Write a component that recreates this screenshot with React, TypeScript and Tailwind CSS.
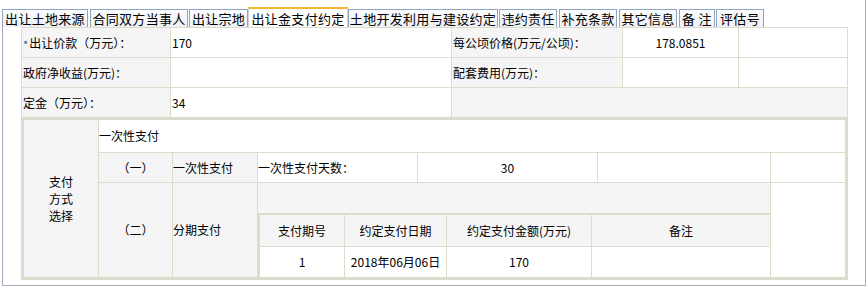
import React from "react";

const tabs: { label: string; w: number; ml: number; active?: boolean }[] = [
  { label: "出让土地来源", w: 86, ml: 0 },
  { label: "合同双方当事人", w: 98, ml: 2 },
  { label: "出让宗地", w: 59, ml: 1 },
  { label: "出让金支付约定", w: 100, ml: 0, active: true },
  { label: "土地开发利用与建设约定", w: 150, ml: 0 },
  { label: "违约责任", w: 58, ml: 1 },
  { label: "补充条款", w: 58, ml: 2 },
  { label: "其它信息", w: 58, ml: 2 },
  { label: "备 注", w: 36, ml: 2 },
  { label: "评估号", w: 48, ml: 1 },
];

const G = "bg-[#f5f5f5]";
const W = "bg-white";

export default function App() {
  return (
    <div className="w-[866px] h-[294px] bg-white text-black font-['Noto_Sans_CJK_SC',sans-serif] text-[12px] leading-[14px]">
      <div className="ml-[2px] w-[864px] h-[286px] border-r border-b border-[#a5adba] flex flex-col">
        {/* tabs */}
        <div className="h-[27px] flex items-end">
          {tabs.map((t) =>
            t.active ? (
              <div
                key={t.label}
                style={{ width: t.w, marginLeft: t.ml }}
                className="h-[20px] bg-white border-t-2 border-t-[#f5b537] border-x border-x-[#c9d2dc] flex items-center justify-center text-[13px] leading-none tracking-[0.3px] whitespace-nowrap"
              >
                {t.label}
              </div>
            ) : (
              <div
                key={t.label}
                style={{ width: t.w, marginLeft: t.ml }}
                className="h-[18px] bg-gradient-to-b from-[#fbfcfd] to-[#eef1f5] border-t border-x border-[#8fa4be] flex items-center justify-center text-[13px] leading-none tracking-[0.3px] whitespace-pre"
              >
                {t.label}
              </div>
            )
          )}
        </div>
        {/* body */}
        <div className="flex-1 border-l border-[#a5adba] pl-[18px]">
          <div className="w-[827px] grid grid-cols-[148px_280px_170px_115px_108px] grid-rows-[29px_29px_29px_161px] gap-px p-px bg-[#dddccc]">
            {/* row 1 */}
            <div className={`${G} flex items-center pl-[1px]`}>
              <span className="text-[11px] text-[#2d4f8e] leading-none mr-[1px] translate-y-[2px]">*</span>
              出让价款（万元）：
            </div>
            <div className={`${W} flex items-center pl-[1px]`}>170</div>
            <div className={`${G} flex items-center pl-[1px]`}>每公顷价格(万元/公顷)：</div>
            <div className={`${W} flex items-center justify-center`}>178.0851</div>
            <div className={W}></div>
            {/* row 2 */}
            <div className={`${G} flex items-center pl-[1px]`}>政府净收益(万元)：</div>
            <div className={W}></div>
            <div className={`${G} flex items-center pl-[1px]`}>配套费用(万元)：</div>
            <div className={W}></div>
            <div className={W}></div>
            {/* row 3 */}
            <div className={`${G} flex items-center pl-[1px]`}>定金（万元）：</div>
            <div className={`${W} flex items-center pl-[1px]`}>34</div>
            <div className={`${G} col-span-3`}></div>
            {/* row 4 nested */}
            <div className="col-span-5 bg-[#dddccc] p-[2px] grid grid-cols-[74px_73px_84px_159px_179px_172px_74px] grid-rows-[32px_29px_94px] gap-px">
              <div className={`${G} row-span-3 flex flex-col items-center justify-center text-center leading-[17px]`}>
                <span>支付</span>
                <span>方式</span>
                <span>选择</span>
              </div>
              <div className={`${W} col-span-6 flex items-center`}>一次性支付</div>
              {/* row B */}
              <div className={`${G} flex items-center justify-center`}>（一）</div>
              <div className={`${G} flex items-center`}>一次性支付</div>
              <div className={`${W} flex items-center`}>一次性支付天数：</div>
              <div className={`${W} flex items-center justify-center`}>30</div>
              <div className={W}></div>
              <div className={W}></div>
              {/* row C */}
              <div className={`${G} flex items-center justify-center`}>（二）</div>
              <div className={`${G} flex items-center`}>分期支付</div>
              <div className="col-span-3 flex flex-col bg-[#dddccc]">
                <div className={`${G} h-[30px]`}></div>
                <div className="flex-1 pl-[2px] pt-[2px] grid grid-cols-[84px_101px_144px_178px] grid-rows-[31px_30px] gap-px">
                  <div className={`${G} flex items-center justify-center`}>支付期号</div>
                  <div className={`${G} flex items-center justify-center`}>约定支付日期</div>
                  <div className={`${G} flex items-center justify-center`}>约定支付金额(万元)</div>
                  <div className={`${G} flex items-center justify-center`}>备注</div>
                  <div className={`${W} flex items-center justify-center`}>1</div>
                  <div className={`${W} flex items-center justify-center`}>2018年06月06日</div>
                  <div className={`${W} flex items-center justify-center`}>170</div>
                  <div className={W}></div>
                </div>
              </div>
              <div className={W}></div>
            </div>
          </div>
        </div>
      </div>
    </div>
  );
}
